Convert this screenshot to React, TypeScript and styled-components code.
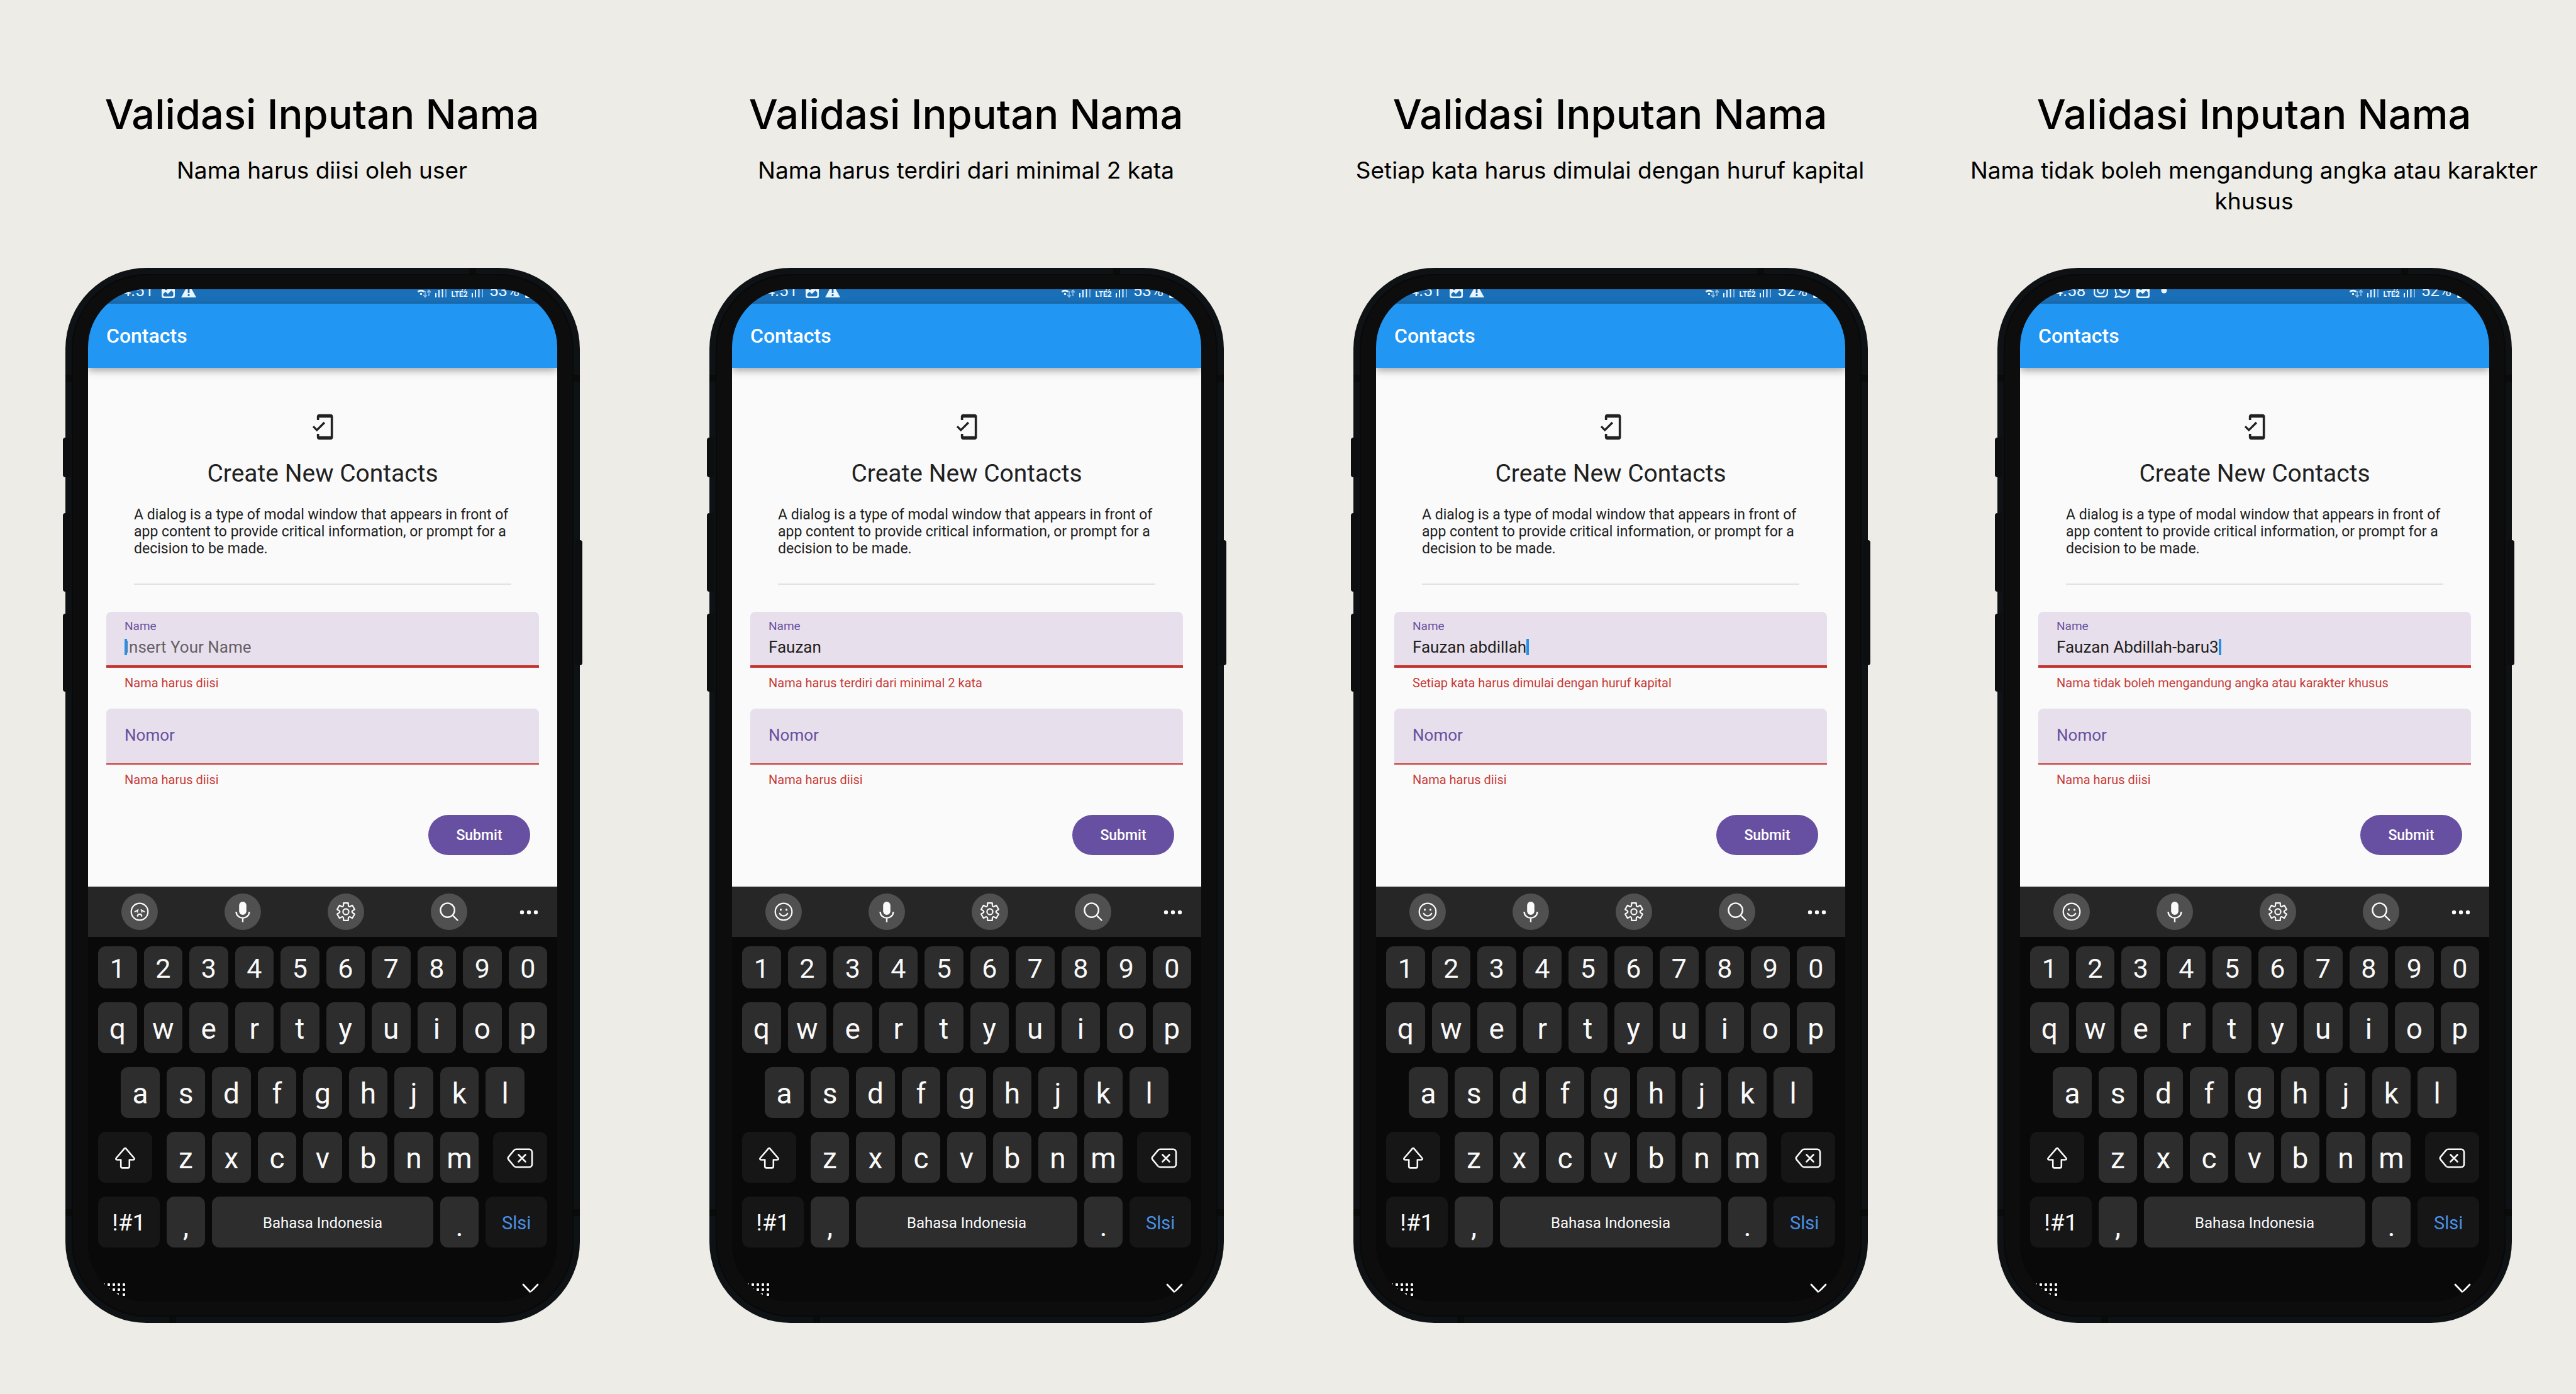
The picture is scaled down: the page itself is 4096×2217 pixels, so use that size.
import React from "react";
import styled, { createGlobalStyle, css } from "styled-components";
import { MdMobileFriendly } from "react-icons/md";

const GlobalStyle = createGlobalStyle`
  *, *::before, *::after { box-sizing: border-box; }
  body { margin: 0; background: #edece6; }
  button, input { font-family: inherit; }
`;

/* ---------- page ---------- */

const Board = styled.main`
  display: grid;
  grid-template-columns: repeat(4, 1fr);
  min-height: 100vh;
  background: #edece6;
  font-family: Roboto, "Liberation Sans", sans-serif;
`;

const Column = styled.section`
  display: flex;
  flex-direction: column;
  padding-bottom: 112px;
`;

const Heading = styled.header`
  display: flex;
  flex-direction: column;
  align-items: center;
  gap: 24px;
  min-height: 426px;
  padding: 142px 48px 0;
  color: #000;
  font-family: Inter, "Liberation Sans", sans-serif;
  text-align: center;
`;

const Title = styled.h1`
  margin: 0;
  font-size: 65px;
  font-weight: 500;
  line-height: 80px;
`;

const Subtitle = styled.p`
  margin: 0;
  font-size: 37px;
  line-height: 49px;
`;

/* ---------- phone body ---------- */

const PhoneSlot = styled.div`
  padding: 0 102px 0 104px;
`;

const Frame = styled.div`
  position: relative;
  padding: 10px;
  border-radius: 129px;
  background: #0f1214;
`;

const Bezel = styled.div`
  position: relative;
  padding: 24px 26px;
  border-radius: 119px;
  background: #0d0d0d;
  box-shadow: inset 0 0 0 2px #07090a;
`;

const SideButton = styled.span<{ $side: "left" | "right"; $top: number; $height: number }>`
  position: absolute;
  top: ${(p) => p.$top}px;
  ${(p) => p.$side}: -4px;
  width: 12px;
  height: ${(p) => p.$height}px;
  border-radius: 4px;
  background: #0c0e10;
`;

const SideBand = styled.span<{ $side: "left" | "right"; $top: number }>`
  position: absolute;
  top: ${(p) => p.$top}px;
  ${(p) => p.$side}: 0;
  width: 10px;
  height: 11px;
  background: #0a0b0b;
`;

const EdgeBand = styled.span<{ $edge: "top" | "bottom" }>`
  position: absolute;
  ${(p) => p.$edge}: 0;
  ${(p) => (p.$edge === "top" ? "right" : "left")}: 165px;
  width: 11px;
  height: 10px;
  background: #0a0b0b;
`;

const Screen = styled.div`
  display: flex;
  flex-direction: column;
  overflow: hidden;
  border-radius: 92px;
  background: #090909;
`;

/* ---------- status bar ---------- */

const StatusBar = styled.div`
  display: flex;
  align-items: flex-end;
  justify-content: space-between;
  height: 23px;
  padding: 0 37px 9px 36px;
  background: #1a70b8;
  color: #eaf6ff;
`;

const StatusGroup = styled.div<{ $gap: number }>`
  display: flex;
  align-items: flex-end;
  gap: ${(p) => p.$gap}px;
`;

const StatusText = styled.span`
  padding: 0 3px;
  font-size: 26px;
  line-height: 24px;
`;

const Carrier = styled.span`
  display: flex;
  flex-direction: column;
  align-items: center;
  font-size: 12px;
  font-weight: 700;
  line-height: 12px;
`;

/* ---------- app ---------- */

const AppBar = styled.div`
  position: relative;
  display: flex;
  align-items: center;
  height: 102px;
  padding: 0 29px;
  background: #2196f3;
  box-shadow: 0 4px 12px rgba(0, 0, 0, 0.36);
`;

const AppTitle = styled.h2`
  margin: 0;
  color: #fff;
  font-size: 32px;
  font-weight: 500;
  line-height: 40px;
`;

const Form = styled.form`
  display: flex;
  flex-direction: column;
  padding: 72px 29px 50px;
  background: #fafafa;
  color: #212121;
`;

const Intro = styled.div`
  display: flex;
  flex-direction: column;
  align-items: center;
  gap: 29px;
  margin: 0 44px 43px;
  padding-bottom: 42px;
  border-bottom: 2px solid #e1e1e1;
`;

const FormTitle = styled.h3`
  margin: 0;
  font-size: 39px;
  font-weight: 400;
  line-height: 46px;
`;

const Description = styled.p`
  margin: 0;
  font-size: 23px;
  line-height: 27px;
`;

const Field = styled.div<{ $row?: boolean; $focused?: boolean }>`
  display: flex;
  flex-direction: ${(p) => (p.$row ? "row" : "column")};
  align-items: ${(p) => (p.$row ? "center" : "flex-start")};
  gap: 6px;
  height: 89px;
  padding: ${(p) => (p.$row ? "0 29px 4px" : "12px 29px 0")};
  border-bottom: ${(p) => (p.$focused ? 4 : 2)}px solid #c5332f;
  border-radius: 8px 8px 0 0;
  background: #e7dfeb;
`;

const Label = styled.label<{ $large?: boolean }>`
  color: #6750a1;
  font-size: ${(p) => (p.$large ? 26 : 19)}px;
  line-height: ${(p) => (p.$large ? 32 : 22)}px;
`;

const InputLine = styled.div`
  display: flex;
  align-items: center;
`;

const inputBase = css`
  min-width: 0;
  padding: 0;
  border: 0;
  outline: 0;
  background: transparent;
  color: #212121;
  font-size: 26px;
  line-height: 32px;
`;

const GrowingInput = styled.input`
  ${inputBase}
  field-sizing: content;
  &::placeholder { color: #666068; opacity: 1; }
`;

const FillInput = styled.input`
  ${inputBase}
  flex: 1;
`;

const Caret = styled.span<{ $before?: boolean }>`
  position: relative;
  width: 4px;
  height: 26px;
  margin-right: ${(p) => (p.$before ? -4 : 0)}px;
  background: #2490e6;
`;

const ErrorText = styled.p`
  margin: 12px 29px 29px;
  color: #c83a37;
  font-size: 20px;
  line-height: 24px;
  white-space: nowrap;
`;

const Submit = styled.button`
  align-self: flex-end;
  width: 162px;
  height: 64px;
  margin: 15px 14px 0 0;
  padding: 0;
  border: 0;
  border-radius: 32px;
  background: #6750a1;
  color: #fff;
  font-size: 23px;
  font-weight: 500;
`;

/* ---------- keyboard ---------- */

const Keyboard = styled.div`
  background: #090909;
`;

const Toolbar = styled.div`
  display: flex;
  align-items: center;
  justify-content: space-between;
  height: 80px;
  padding: 0 28px 2px 53px;
  border-top: 1px solid #444;
  background: #262626;
`;

const Tools = styled.div`
  display: flex;
  gap: 106px;
`;

const plainButton = css`
  display: flex;
  align-items: center;
  justify-content: center;
  padding: 0;
  border: 0;
  background: none;
  color: #fafafa;
`;

const Tool = styled.button`
  ${plainButton}
  width: 58px;
  height: 58px;
  border-radius: 50%;
  background: #505050;
`;

const IconButton = styled.button`
  ${plainButton}
`;

const Keys = styled.div`
  display: grid;
  grid-template-columns: repeat(20, 1fr);
  grid-template-rows: 67px;
  grid-auto-rows: 81px;
  gap: 22px 11px;
  padding: 15px 16px 0;
`;

type KeyKind = "digit" | "letter" | "mark" | "symbols" | "space" | "done" | "edit";

const keySize: Record<KeyKind, number> = {
  digit: 43, letter: 46, mark: 46, symbols: 37, space: 24, done: 29, edit: 29,
};

const Key = styled.button<{ $kind: KeyKind; $span: number; $start?: number; $trim?: "left" | "right" }>`
  ${plainButton}
  grid-column: ${(p) => (p.$start ? `${p.$start} / span ${p.$span}` : `span ${p.$span}`)};
  ${(p) => p.$trim && `margin-${p.$trim}: 12px;`}
  padding-top: ${(p) => (p.$kind === "mark" ? 12 : 3)}px;
  border-radius: 12px;
  background: ${(p) => (["symbols", "done", "edit"].includes(p.$kind) ? "#161616" : "#2d2d2d")};
  color: ${(p) => (p.$kind === "done" ? "#4a90e6" : "#fafafa")};
  font-size: ${(p) => keySize[p.$kind]}px;
  line-height: 54px;
`;

const NavRow = styled.div`
  display: flex;
  align-items: flex-start;
  justify-content: space-between;
  height: 86px;
  padding: 57px 29px 0 15px;
`;

/* ---------- drawings ---------- */

const PictureIcon = () => (
  <svg width="21" height="24" viewBox="0 0 21 24">
    <rect x="0" y="3" width="21" height="21" rx="3.5" fill="currentColor" />
    <path d="M2.500 17.500 6 14l4 3.500L15.500 12l3 3v4.500a2 2 0 0 1-2 2h-12a2 2 0 0 1-2-2z" fill="#1a70b8" />
    <circle cx="7" cy="9" r="2.300" fill="#1a70b8" />
  </svg>
);

const WarningIcon = () => (
  <svg width="24" height="23" viewBox="0 0 24 23">
    <path d="M12 0 24 22H0z" fill="currentColor" />
    <path d="M10.6 8h2.8v7h-2.8zM10.6 17h2.8v3h-2.8z" fill="#1a70b8" />
  </svg>
);

const CameraIcon = () => (
  <svg width="23" height="25" viewBox="0 0 23 25" fill="none" stroke="currentColor" strokeWidth="2.2">
    <rect x="1.2" y="2.2" width="20.6" height="20.6" rx="5.5" />
    <circle cx="11.5" cy="12.5" r="5.2" />
    <circle cx="17.2" cy="7" r="0.6" />
  </svg>
);

const ChatIcon = () => (
  <svg width="25" height="25" viewBox="0 0 25 25">
    <path d="M1.5 24 3.2 18A11 11 0 1 1 7.5 22.3z" fill="none" stroke="currentColor" strokeWidth="2.2" />
    <path d="M8.2 6.6c.8-.9 1.8-.6 2.100.2l.8 2c.2.600-.1 1-.9 1.900 1 1.800 2.300 2.900 4.100 3.700.8-1 1.200-1.400 1.800-1.100l2.100 1c.7.400.5 1.600-.3 2.400-1.400 1.300-3.600 1.200-6.300-.4-2.300-1.400-4.100-3.700-4.500-5.700-.2-1.500.2-3.100 1.100-4z" fill="currentColor" />
  </svg>
);

const DotIcon = () => (
  <svg width="26" height="24" viewBox="0 0 26 24">
    <circle cx="13" cy="12" r="4.500" fill="currentColor" />
  </svg>
);

const WifiIcon = () => (
  <svg width="26" height="24" viewBox="0 0 26 24" fill="none" stroke="currentColor">
    <path d="M1 9a12 12 0 0 1 17 0" strokeWidth="2" opacity="0.5" />
    <path d="M4.500 14a7.500 7.500 0 0 1 10 0" strokeWidth="2.600" />
    <circle cx="9.500" cy="17.500" r="1.800" fill="currentColor" stroke="none" />
    <path d="M16 13v9m-3-3 3 3.500 3-3.500M22 21v-9m-3 3 3-3.500 3 3.500" strokeWidth="1.600" opacity="0.6" />
  </svg>
);

const SignalIcon = () => (
  <svg width="19" height="24" viewBox="0 0 19 24" fill="currentColor">
    <rect x="0" y="16" width="2" height="7" />
    <rect x="5" y="11" width="2" height="12" />
    <rect x="10.500" y="5" width="2" height="18" />
    <rect x="16" y="0" width="2" height="23" opacity="0.5" />
  </svg>
);

const BatteryIcon = () => (
  <svg width="14" height="24" viewBox="0 0 14 24" fill="currentColor">
    <path d="M4 0h6v3h2a2 2 0 0 1 2 2v17a2 2 0 0 1-2 2H2a2 2 0 0 1-2-2V5a2 2 0 0 1 2-2h2z" />
  </svg>
);

const iconStroke = {
  fill: "none",
  stroke: "currentColor",
  strokeLinecap: "round" as const,
  strokeLinejoin: "round" as const,
};

const FaceIcon = ({ sad }: { sad: boolean }) => (
  <svg width="30" height="30" viewBox="0 0 30 30" {...iconStroke} strokeWidth="2.2">
    <circle cx="15" cy="15" r="13.300" />
    {sad ? (
      <>
        <path d="M7.500 15 12.500 12M22.500 15 17.500 12" strokeWidth="2" />
        <path d="M11.500 13.800v1.800M18.500 13.800v1.800" strokeWidth="2" />
        <path d="M11.700 21.800c.4-3.800 6.200-3.800 6.600 0" strokeWidth="2.200" />
      </>
    ) : (
      <>
        <path d="M10.500 11.500v.6M19.500 11.500v.6" strokeWidth="3" />
        <path d="M8.800 17.800c2.400 5 10 5 12.400 0" strokeWidth="2.200" />
      </>
    )}
  </svg>
);

const MicIcon = () => (
  <svg width="26" height="34" viewBox="0 0 26 34" {...iconStroke} strokeWidth="2.400">
    <rect x="7.200" y="1" width="11.600" height="21" rx="5.800" fill="currentColor" stroke="none" />
    <path d="M2.500 17c.6 13.200 20.400 13.200 21 0M13 27.500V33.500" strokeLinecap="butt" />
  </svg>
);

function gearOutline(cx: number, cy: number) {
  const at = (deg: number, r: number) => {
    const a = (deg * Math.PI) / 180;
    return `${(cx + r * Math.cos(a)).toFixed(2)} ${(cy + r * Math.sin(a)).toFixed(2)}`;
  };
  let d = "";
  for (let i = 0; i < 6; i++) {
    const c = -90 + i * 60;
    d += `${i === 0 ? "M" : "L"}${at(c - 21, 10.8)}L${at(c - 15, 14.4)}L${at(c + 15, 14.4)}L${at(c + 21, 10.8)}`;
    d += `Q${at(c + 30, 8.6)} ${at(c + 39, 10.8)}`;
  }
  return d + "Z";
}

const GearIcon = () => (
  <svg width="32" height="32" viewBox="0 0 32 32" {...iconStroke} strokeWidth="2.200">
    <path d={gearOutline(16, 16)} />
    <circle cx="16" cy="16" r="4.600" />
  </svg>
);

const SearchIcon = () => (
  <svg width="30" height="30" viewBox="0 0 30 30" {...iconStroke} strokeWidth="2.400">
    <circle cx="12.600" cy="12.600" r="11.200" />
    <path d="m20.800 20.800 7.700 7.700" />
  </svg>
);

const MoreIcon = () => (
  <svg width="34" height="12" viewBox="0 0 34 12" fill="currentColor">
    <circle cx="6" cy="7" r="3.200" />
    <circle cx="17" cy="7" r="3.200" />
    <circle cx="28" cy="7" r="3.200" />
  </svg>
);

const ShiftIcon = () => (
  <svg width="34" height="36" viewBox="0 0 34 36" {...iconStroke} strokeWidth="2.600">
    <path d="M15.600 2.800a2 2 0 0 1 2.800 0L31 17.500c1.300 1.500.6 3-1 3h-6.200V31a2.400 2.400 0 0 1-2.400 2.400h-8.800a2.400 2.400 0 0 1-2.400-2.400V20.500H4c-1.600 0-2.300-1.500-1-3z" />
  </svg>
);

const BackspaceIcon = () => (
  <svg width="42" height="32" viewBox="0 0 42 32" {...iconStroke} strokeWidth="2.600">
    <path d="M15 1.800h20.500a4.500 4.500 0 0 1 4.500 4.500v19.400a4.500 4.500 0 0 1-4.500 4.500H15a5 5 0 0 1-3.800-1.700L2.800 18.300a3.500 3.500 0 0 1 0-4.600l8.400-10.200A5 5 0 0 1 15 1.800z" />
    <path d="m18.500 10.500 11 11M29.500 10.500l-11 11" />
  </svg>
);

const KeypadIcon = () => (
  <svg width="44" height="22" viewBox="0 0 44 22" fill="currentColor">
    {[0, 8].map((y) =>
      [0, 8, 16, 24, 32, 40].map((x) => <rect key={`${x}-${y}`} x={x} y={y} width="4" height="4" rx="1" />)
    )}
    <rect x="0" y="16" width="4" height="4" rx="1" />
    <rect x="8" y="16" width="26" height="4" />
    <rect x="40" y="16" width="4" height="4" rx="1" />
  </svg>
);

const ChevronIcon = () => (
  <svg width="27" height="17" viewBox="0 0 27 17" {...iconStroke} strokeWidth="2.800">
    <path d="m2 2 11.500 12L25 2" />
  </svg>
);

/* ---------- data ---------- */

type Notice = "picture" | "warning" | "camera" | "chat" | "dot";

const notices: Record<Notice, React.ReactElement> = {
  picture: <PictureIcon />,
  warning: <WarningIcon />,
  camera: <CameraIcon />,
  chat: <ChatIcon />,
  dot: <DotIcon />,
};

interface Demo {
  id: string;
  rule: string;
  time: string;
  battery: string;
  notices: Notice[];
  value: string;
  caret: boolean;
  sad: boolean;
  error: string;
}

const demos: Demo[] = [
  { id: "empty", rule: "Nama harus diisi oleh user", time: "14.51", battery: "53%", notices: ["picture", "warning"], value: "", caret: true, sad: true, error: "Nama harus diisi" },
  { id: "words", rule: "Nama harus terdiri dari minimal 2 kata", time: "14.51", battery: "53%", notices: ["picture", "warning"], value: "Fauzan", caret: false, sad: false, error: "Nama harus terdiri dari minimal 2 kata" },
  { id: "capital", rule: "Setiap kata harus dimulai dengan huruf kapital", time: "14.51", battery: "52%", notices: ["picture", "warning"], value: "Fauzan abdillah", caret: true, sad: false, error: "Setiap kata harus dimulai dengan huruf kapital" },
  { id: "special", rule: "Nama tidak boleh mengandung angka atau karakter khusus", time: "14.58", battery: "52%", notices: ["camera", "chat", "picture", "dot"], value: "Fauzan Abdillah-baru3", caret: true, sad: false, error: "Nama tidak boleh mengandung angka atau karakter khusus" },
];

/* ---------- parts ---------- */

const KeyboardPanel = ({ sad }: { sad: boolean }) => (
  <Keyboard>
    <Toolbar>
      <Tools>
        <Tool type="button" aria-label="Emoji"><FaceIcon sad={sad} /></Tool>
        <Tool type="button" aria-label="Voice"><MicIcon /></Tool>
        <Tool type="button" aria-label="Settings"><GearIcon /></Tool>
        <Tool type="button" aria-label="Search"><SearchIcon /></Tool>
      </Tools>
      <IconButton type="button" aria-label="More"><MoreIcon /></IconButton>
    </Toolbar>
    <Keys>
      {[..."1234567890"].map((k) => <Key key={k} type="button" $kind="digit" $span={2}>{k}</Key>)}
      {[..."qwertyuiop"].map((k) => <Key key={k} type="button" $kind="letter" $span={2}>{k}</Key>)}
      {[..."asdfghjkl"].map((k, i) => (
        <Key key={k} type="button" $kind="letter" $span={2} $start={i === 0 ? 2 : undefined}>{k}</Key>
      ))}
      <Key type="button" aria-label="Shift" $kind="edit" $span={3} $start={1} $trim="right"><ShiftIcon /></Key>
      {[..."zxcvbnm"].map((k) => <Key key={k} type="button" $kind="letter" $span={2}>{k}</Key>)}
      <Key type="button" aria-label="Backspace" $kind="edit" $span={3} $trim="left"><BackspaceIcon /></Key>
      <Key type="button" $kind="symbols" $span={3}>!#1</Key>
      <Key type="button" $kind="mark" $span={2}>,</Key>
      <Key type="button" $kind="space" $span={10}>Bahasa Indonesia</Key>
      <Key type="button" $kind="mark" $span={2}>.</Key>
      <Key type="button" $kind="done" $span={3}>Slsi</Key>
    </Keys>
    <NavRow>
      <IconButton type="button" aria-label="Switch keyboard"><KeypadIcon /></IconButton>
      <IconButton type="button" aria-label="Hide keyboard"><ChevronIcon /></IconButton>
    </NavRow>
  </Keyboard>
);

const ContactForm = ({ demo }: { demo: Demo }) => (
  <Form onSubmit={(e) => e.preventDefault()}>
    <Intro>
      <MdMobileFriendly size={44} />
      <FormTitle>Create New Contacts</FormTitle>
      <Description>
        A dialog is a type of modal window that appears in front of app content to provide critical
        information, or prompt for a decision to be made.
      </Description>
    </Intro>
    <Field $focused>
      <Label htmlFor={`${demo.id}-name`}>Name</Label>
      <InputLine>
        {demo.caret && !demo.value && <Caret $before />}
        <GrowingInput id={`${demo.id}-name`} placeholder="Insert Your Name" defaultValue={demo.value} />
        {demo.caret && demo.value && <Caret />}
      </InputLine>
    </Field>
    <ErrorText>{demo.error}</ErrorText>
    <Field $row>
      <Label $large htmlFor={`${demo.id}-number`}>Nomor</Label>
      <FillInput id={`${demo.id}-number`} />
    </Field>
    <ErrorText>Nama harus diisi</ErrorText>
    <Submit type="submit">Submit</Submit>
  </Form>
);

const Phone = ({ demo }: { demo: Demo }) => (
  <Frame>
    <SideButton $side="left" $top={270} $height={63} />
    <SideButton $side="left" $top={390} $height={125} />
    <SideButton $side="left" $top={550} $height={124} />
    <SideButton $side="right" $top={433} $height={199} />
    <SideBand $side="left" $top={170} />
    <SideBand $side="right" $top={170} />
    <SideBand $side="left" $top={1497} />
    <SideBand $side="right" $top={1497} />
    <EdgeBand $edge="top" />
    <EdgeBand $edge="bottom" />
    <Bezel>
      <Screen>
        <StatusBar>
          <StatusGroup $gap={10}>
            <StatusText>{demo.time}</StatusText>
            {demo.notices.map((n) => <React.Fragment key={n}>{notices[n]}</React.Fragment>)}
          </StatusGroup>
          <StatusGroup $gap={6}>
            <WifiIcon />
            <SignalIcon />
            <Carrier><span>Vo))</span><span>LTE2</span></Carrier>
            <SignalIcon />
            <StatusText>{demo.battery}</StatusText>
            <BatteryIcon />
          </StatusGroup>
        </StatusBar>
        <AppBar><AppTitle>Contacts</AppTitle></AppBar>
        <ContactForm demo={demo} />
        <KeyboardPanel sad={demo.sad} />
      </Screen>
    </Bezel>
  </Frame>
);

export default function App() {
  return (
    <>
      <GlobalStyle />
      <Board>
        {demos.map((demo) => (
          <Column key={demo.id}>
            <Heading>
              <Title>Validasi Inputan Nama</Title>
              <Subtitle>{demo.rule}</Subtitle>
            </Heading>
            <PhoneSlot>
              <Phone demo={demo} />
            </PhoneSlot>
          </Column>
        ))}
      </Board>
    </>
  );
}
